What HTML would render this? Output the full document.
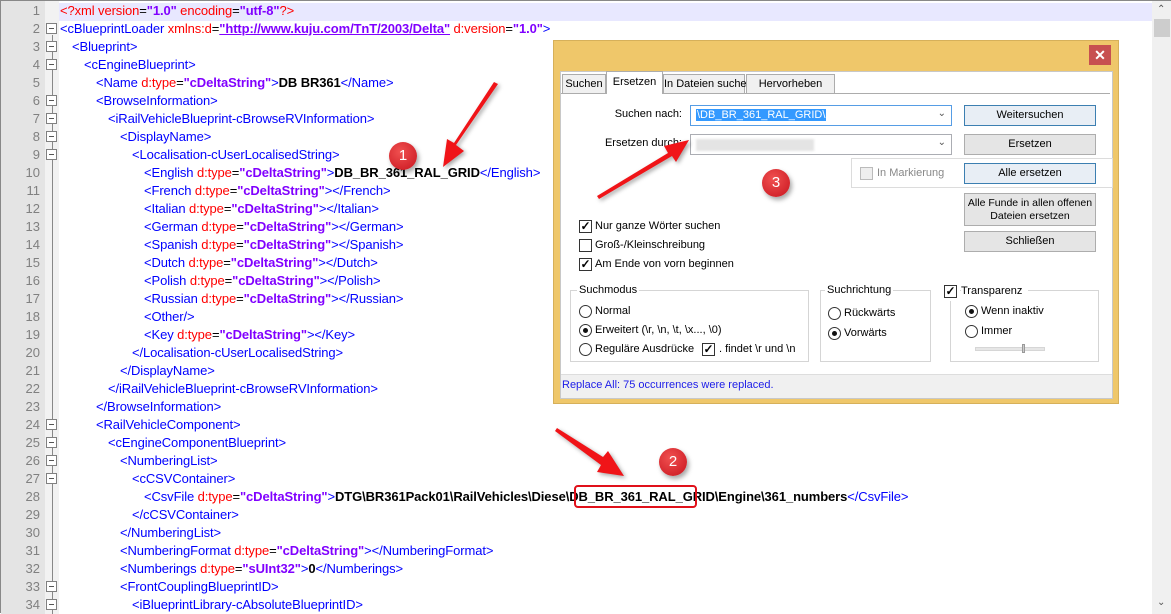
<!DOCTYPE html>
<html><head><meta charset="utf-8"><style>
*{margin:0;padding:0;box-sizing:border-box}
body{width:1171px;height:613px;overflow:hidden;background:#fff;font-family:"Liberation Sans",sans-serif;position:relative}
.ed{position:absolute;left:0;top:0;width:1171px;height:613px;border-top:1px solid #888;border-left:1px solid #888}
.gut{position:absolute;left:0;top:0;width:44px;height:613px;background:#e4e4e4}
.fold{position:absolute;left:44px;top:0;width:14px;height:613px;background:#f2f2f2}
.ln{position:absolute;left:0;width:40px;text-align:right;font-size:13px;color:#808080;line-height:18px}
.l{position:absolute;left:60px;font-size:13px;line-height:18px;white-space:pre;color:#00f;letter-spacing:-0.1px}
.a{color:#f00}.v{color:#8000ff;font-weight:bold}.t{color:#000;font-weight:bold}.k{color:#000}
.fb{position:absolute;left:46px;width:11px;height:11px;border:1px solid #808080;background:#fff}
.fb:after{content:"";position:absolute;left:2px;top:4px;width:5px;height:1px;background:#555}
.dlg{position:absolute;left:553px;top:40px;width:566px;height:364px;background:#efc76a;border:1px solid #d6b05a}
.in{position:absolute;left:6px;top:30px;width:553px;height:328px;background:#fff;border:1px solid #c8c8c8;font-size:11px}
.tab{position:absolute;top:2px;height:20px;border:1px solid #acacac;background:#f0f0f0;font-size:11px;line-height:18px;text-align:center;white-space:nowrap}
.lbl{position:absolute;font-size:11px;color:#000;white-space:nowrap}
.inp{position:absolute;left:129px;width:262px;height:21px;border:1px solid #abadb3;background:#fff}
.btn{position:absolute;left:403px;width:132px;height:21px;border:1px solid #adadad;background:#e5e5e5;font-size:11px;text-align:center;line-height:19px}
.cb{position:absolute;width:13px;height:13px;border:1px solid #333;background:#fff;font-size:12px;line-height:11px;text-align:center;font-weight:bold}
.rb{position:absolute;width:13px;height:13px;border:1px solid #333;border-radius:50%;background:#fff}
.rb.on:after{content:"";position:absolute;left:3px;top:3px;width:5px;height:5px;border-radius:50%;background:#111}
.grp{position:absolute;border:1px solid #d5d5d5}
.badge{position:absolute;width:28px;height:28px;border-radius:50%;background:radial-gradient(circle at 40% 35%,#f05050,#c8141e);color:#fff;font-size:15px;text-align:center;line-height:28px;box-shadow:2px 3px 5px rgba(0,0,0,.35)}
</style></head><body>
<div class="ed">
<div class="gut"></div><div class="fold"></div>
<div style="position:absolute;left:58px;top:2px;width:1093px;height:18px;background:#e8e8ff"></div>
<div style="position:absolute;left:1151px;top:0;width:20px;height:613px;background:#f0f0f0"></div>
<div style="position:absolute;left:1153px;top:18px;width:16px;height:18px;background:#cdcdcd"></div>
<div style="position:absolute;left:1156px;top:3px;font-size:10px;color:#555">&#8963;</div>
<div style="position:absolute;left:1156px;top:596px;font-size:10px;color:#555">&#8964;</div>
<div style="position:absolute;left:51px;top:34px;width:1px;height:579px;background:#888"></div>
</div>
<div id="code"></div>
<script>
var L=[
[0,'<span class="a">&lt;?xml version</span><span class="k">=</span><span class="v">"1.0"</span><span class="a"> encoding</span><span class="k">=</span><span class="v">"utf-8"</span><span class="a">?&gt;</span>',0],
[0,'&lt;cBlueprintLoader <span class="a">xmlns:d</span><span class="k">=</span><span class="v" style="text-decoration:underline">"http://www.kuju.com/TnT/2003/Delta"</span><span class="a"> d:version</span><span class="k">=</span><span class="v">"1.0"</span>&gt;',1],
[1,'&lt;Blueprint&gt;',1],[2,'&lt;cEngineBlueprint&gt;',1],
[3,'&lt;Name <span class="a">d:type</span><span class="k">=</span><span class="v">"cDeltaString"</span>&gt;<span class="t">DB BR361</span>&lt;/Name&gt;',0],
[3,'&lt;BrowseInformation&gt;',1],[4,'&lt;iRailVehicleBlueprint-cBrowseRVInformation&gt;',1],[5,'&lt;DisplayName&gt;',1],[6,'&lt;Localisation-cUserLocalisedString&gt;',1],
[7,'&lt;English <span class="a">d:type</span><span class="k">=</span><span class="v">"cDeltaString"</span>&gt;<span class="t">DB_BR_361_RAL_GRID</span>&lt;/English&gt;',0],
[7,'&lt;French <span class="a">d:type</span><span class="k">=</span><span class="v">"cDeltaString"</span>&gt;&lt;/French&gt;',0],
[7,'&lt;Italian <span class="a">d:type</span><span class="k">=</span><span class="v">"cDeltaString"</span>&gt;&lt;/Italian&gt;',0],
[7,'&lt;German <span class="a">d:type</span><span class="k">=</span><span class="v">"cDeltaString"</span>&gt;&lt;/German&gt;',0],
[7,'&lt;Spanish <span class="a">d:type</span><span class="k">=</span><span class="v">"cDeltaString"</span>&gt;&lt;/Spanish&gt;',0],
[7,'&lt;Dutch <span class="a">d:type</span><span class="k">=</span><span class="v">"cDeltaString"</span>&gt;&lt;/Dutch&gt;',0],
[7,'&lt;Polish <span class="a">d:type</span><span class="k">=</span><span class="v">"cDeltaString"</span>&gt;&lt;/Polish&gt;',0],
[7,'&lt;Russian <span class="a">d:type</span><span class="k">=</span><span class="v">"cDeltaString"</span>&gt;&lt;/Russian&gt;',0],
[7,'&lt;Other/&gt;',0],
[7,'&lt;Key <span class="a">d:type</span><span class="k">=</span><span class="v">"cDeltaString"</span>&gt;&lt;/Key&gt;',0],
[6,'&lt;/Localisation-cUserLocalisedString&gt;',0],[5,'&lt;/DisplayName&gt;',0],[4,'&lt;/iRailVehicleBlueprint-cBrowseRVInformation&gt;',0],[3,'&lt;/BrowseInformation&gt;',0],
[3,'&lt;RailVehicleComponent&gt;',1],[4,'&lt;cEngineComponentBlueprint&gt;',1],[5,'&lt;NumberingList&gt;',1],[6,'&lt;cCSVContainer&gt;',1],
[7,'&lt;CsvFile <span class="a">d:type</span><span class="k">=</span><span class="v">"cDeltaString"</span>&gt;<span class="t">DTG\\BR361Pack01\\RailVehicles\\Diese\\DB_BR_361_RAL_GRID\\Engine\\361_numbers</span>&lt;/CsvFile&gt;',0],
[6,'&lt;/cCSVContainer&gt;',0],[5,'&lt;/NumberingList&gt;',0],
[5,'&lt;NumberingFormat <span class="a">d:type</span><span class="k">=</span><span class="v">"cDeltaString"</span>&gt;&lt;/NumberingFormat&gt;',0],
[5,'&lt;Numberings <span class="a">d:type</span><span class="k">=</span><span class="v">"sUInt32"</span>&gt;<span class="t">0</span>&lt;/Numberings&gt;',0],
[5,'&lt;FrontCouplingBlueprintID&gt;',1],[6,'&lt;iBlueprintLibrary-cAbsoluteBlueprintID&gt;',1]];
var h='';
L.forEach(function(r,i){var y=2+18*i;
h+='<div class="ln" style="top:'+y+'px">'+(i+1)+'</div>';
if(r[2])h+='<div class="fb" style="top:'+(y+3)+'px"></div>';
h+='<div class="l" style="top:'+y+'px;left:'+(60+12*r[0])+'px">'+r[1]+'</div>';});
document.getElementById('code').innerHTML=h;
</script>
<div style="position:absolute;left:574px;top:485px;width:123px;height:23px;border:2px solid #e0101a;border-radius:4px"></div>

<div class="dlg">
<div style="position:absolute;left:535px;top:4px;width:22px;height:20px;background:#c75050;color:#fff;font-weight:bold;font-size:14px;text-align:center;line-height:20px">✕</div>
<div class="in">
<div style="position:absolute;left:0;top:21px;width:549px;height:1px;background:#acacac"></div>
<div class="tab" style="left:1px;width:44px">Suchen</div>
<div class="tab" style="left:45px;width:57px;top:-1px;height:23px;background:#fff;border-bottom:none;line-height:20px">Ersetzen</div>
<div class="tab" style="left:102px;width:82px">In Dateien suchen</div>
<div class="tab" style="left:185px;width:89px">Hervorheben</div>
<div class="lbl" style="right:430px;top:36px">Suchen nach:</div>
<div class="inp" style="top:33px;border-color:#569de5"><span style="position:absolute;left:5px;top:3px;background:#3399ff;color:#fff;font-size:11px;padding:0 1px">\DB_BR_361_RAL_GRID\</span><span style="position:absolute;right:5px;top:2px;font-size:10px;color:#555">&#8964;</span></div>
<div class="lbl" style="right:430px;top:65px">Ersetzen durch:</div>
<div class="inp" style="top:62px"><span style="position:absolute;left:5px;top:4px;width:118px;height:12px;background:#e4e4e4;filter:blur(1px)"></span><span style="position:absolute;right:5px;top:2px;font-size:10px;color:#555">&#8964;</span></div>
<div class="btn" style="top:33px;border-color:#3c7fb1;background:#e8eef5">Weitersuchen</div>
<div class="btn" style="top:62px">Ersetzen</div>
<div class="grp" style="left:290px;top:86px;width:262px;height:30px;border-color:#dcdcdc"></div>
<div class="cb" style="left:299px;top:95px;border-color:#bbb;background:#eee"></div>
<div class="lbl" style="left:316px;top:95px;color:#888">In Markierung</div>
<div class="btn" style="top:91px;border-color:#3c7fb1;background:#e8eef5">Alle ersetzen</div>
<div class="btn" style="top:121px;height:33px;line-height:13px;padding-top:3px;font-size:10.5px">Alle Funde in allen offenen<br>Dateien ersetzen</div>
<div class="btn" style="top:159px">Schließen</div>
<div class="cb" style="left:18px;top:148px">✓</div><div class="lbl" style="left:34px;top:148px">Nur ganze Wörter suchen</div>
<div class="cb" style="left:18px;top:167px"></div><div class="lbl" style="left:34px;top:167px">Groß-/Kleinschreibung</div>
<div class="cb" style="left:18px;top:186px">✓</div><div class="lbl" style="left:34px;top:186px">Am Ende von vorn beginnen</div>
<div class="grp" style="left:9px;top:218px;width:239px;height:72px"></div>
<div class="lbl" style="left:16px;top:212px;background:#fff;padding:0 2px">Suchmodus</div>
<div class="rb" style="left:18px;top:233px"></div><div class="lbl" style="left:34px;top:233px">Normal</div>
<div class="rb on" style="left:18px;top:252px"></div><div class="lbl" style="left:34px;top:252px">Erweitert (\r, \n, \t, \x..., \0)</div>
<div class="rb" style="left:18px;top:271px"></div><div class="lbl" style="left:34px;top:271px">Reguläre Ausdrücke</div>
<div class="cb" style="left:141px;top:271px">✓</div><div class="lbl" style="left:158px;top:271px">. findet \r und \n</div>
<div class="grp" style="left:259px;top:218px;width:111px;height:72px"></div>
<div class="lbl" style="left:264px;top:212px;background:#fff;padding:0 2px">Suchrichtung</div>
<div class="rb" style="left:267px;top:235px"></div><div class="lbl" style="left:283px;top:235px">Rückwärts</div>
<div class="rb on" style="left:267px;top:255px"></div><div class="lbl" style="left:283px;top:255px">Vorwärts</div>
<div class="grp" style="left:389px;top:218px;width:149px;height:72px"></div>
<div class="cb" style="left:383px;top:213px;box-shadow:0 0 0 3px #fff">✓</div><div class="lbl" style="left:400px;top:213px;background:#fff;padding-right:6px">Transparenz</div>
<div class="rb on" style="left:404px;top:233px"></div><div class="lbl" style="left:420px;top:233px">Wenn inaktiv</div>
<div class="rb" style="left:404px;top:253px"></div><div class="lbl" style="left:420px;top:253px">Immer</div>
<div style="position:absolute;left:414px;top:275px;width:70px;height:4px;background:#e6e6e6;border:1px solid #d6d6d6"></div>
<div style="position:absolute;left:461px;top:272px;width:3px;height:9px;background:#ccc;border:1px solid #999"></div>
<div style="position:absolute;left:0;top:302px;width:551px;height:24px;background:#f0f0f0;border-top:1px solid #ddd"></div>
<div class="lbl" style="left:1px;top:307px;color:#1c1ce8">Replace All: 75 occurrences were replaced.</div>
</div></div>

<svg style="position:absolute;left:0;top:0" width="1171" height="613">
<g fill="#f01418" style="filter:drop-shadow(2px 2px 2px rgba(0,0,0,.35))">
<polygon points="498,84 456,145 464,151 443,167 447,139 454,143 494,82"/>
<polygon points="597,196 668,153 664,146 689,140 676,162 672,156 599,199"/>
<polygon points="557,428 603,457 608,451 624,476 597,472 601,465 555,431"/>
</g></svg>
<div class="badge" style="left:389px;top:142px">1</div>
<div class="badge" style="left:762px;top:169px">3</div>
<div class="badge" style="left:659px;top:448px">2</div>
</body></html>
